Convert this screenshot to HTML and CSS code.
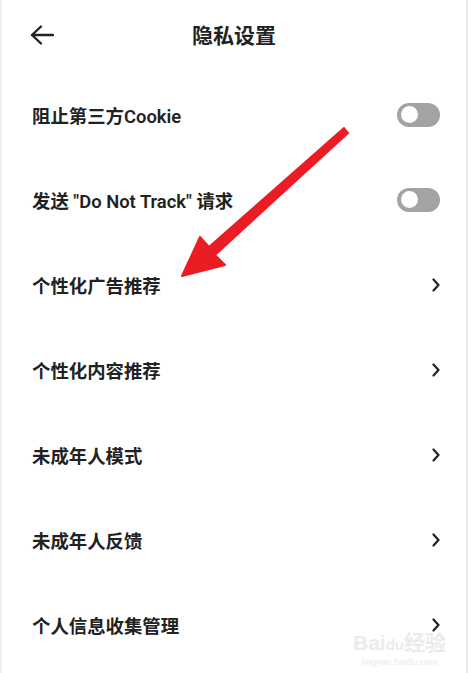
FILE: index.html
```
<!DOCTYPE html>
<html lang="zh-CN">
<head>
    <meta charset="UTF-8">
    <meta name="viewport" content="width=device-width, initial-scale=1.0">
    <title>隐私设置</title>
    <link rel="stylesheet" href="styles.css">
</head>
<body>
    <div class="screen">
        <div class="header">
            <svg class="back" width="24" height="20" viewBox="0 0 24 20">
                <path d="M23 10H2M11 1.5L2 10l9 8.5" fill="none" stroke="#222" stroke-width="2.4" stroke-linecap="round" stroke-linejoin="round"/>
            </svg>
            <h1>隐私设置</h1>
        </div>

        <ul class="list">
            <li class="row">
                <span>阻止第三方Cookie</span>
                <span class="switch"><span class="knob"></span></span>
            </li>
            <li class="row">
                <span>发送 "Do Not Track" 请求</span>
                <span class="switch"><span class="knob"></span></span>
            </li>
            <li class="row">
                <span>个性化广告推荐</span>
                <svg class="chev" width="8" height="14" viewBox="0 0 8 14"><path d="M1.5 1.5L6.5 7l-5 5.5" fill="none" stroke="#222" stroke-width="2.2" stroke-linecap="round" stroke-linejoin="round"/></svg>
            </li>
            <li class="row">
                <span>个性化内容推荐</span>
                <svg class="chev" width="8" height="14" viewBox="0 0 8 14"><path d="M1.5 1.5L6.5 7l-5 5.5" fill="none" stroke="#222" stroke-width="2.2" stroke-linecap="round" stroke-linejoin="round"/></svg>
            </li>
            <li class="row">
                <span>未成年人模式</span>
                <svg class="chev" width="8" height="14" viewBox="0 0 8 14"><path d="M1.5 1.5L6.5 7l-5 5.5" fill="none" stroke="#222" stroke-width="2.2" stroke-linecap="round" stroke-linejoin="round"/></svg>
            </li>
            <li class="row">
                <span>未成年人反馈</span>
                <svg class="chev" width="8" height="14" viewBox="0 0 8 14"><path d="M1.5 1.5L6.5 7l-5 5.5" fill="none" stroke="#222" stroke-width="2.2" stroke-linecap="round" stroke-linejoin="round"/></svg>
            </li>
            <li class="row">
                <span>个人信息收集管理</span>
                <svg class="chev" width="8" height="14" viewBox="0 0 8 14"><path d="M1.5 1.5L6.5 7l-5 5.5" fill="none" stroke="#222" stroke-width="2.2" stroke-linecap="round" stroke-linejoin="round"/></svg>
            </li>
        </ul>

        <!-- red annotation arrow drawn over the list -->
        <svg class="arrow" width="471" height="673" viewBox="0 0 471 673">
            <polygon points="182,276 200,237 209,247 344,128 348,133 215,255 225,265" fill="#ec1c24" stroke="#ec1c24" stroke-width="2" stroke-linejoin="round"/>
        </svg>

        <div class="watermark">
            <div class="wm-brand">Bai<span class="wm-du">du</span>经验</div>
            <div class="wm-url">jingyan.baidu.com</div>
        </div>
    </div>
</body>
</html>
```

FILE: styles.css
```
body {
    margin: 0;
    background: #fff;
    font-family: Roboto, "Noto Sans CJK SC", sans-serif;
    color: #222;
}
.screen {
    position: relative;
    width: 468px;
    height: 673px;
    box-sizing: border-box;
    border-left: 2px solid #efefef;
    border-right: 2px solid #ececec;
    overflow: hidden;
}
.header {
    position: relative;
    height: 72px;
    display: flex;
    align-items: center;
    justify-content: center;
    padding-bottom: 4px;
    box-sizing: border-box;
}
.back {
    position: absolute;
    left: 28px;
    top: 25px;
}
.header h1 {
    margin: 0;
    font-size: 21px;
    font-weight: 600;
    color: #222;
}
.list {
    list-style: none;
    margin: 0;
    padding: 0;
}
.row {
    height: 85px;
    display: flex;
    align-items: center;
    justify-content: space-between;
    padding: 0 26px 0 30px;
    font-size: 18.4px;
    font-weight: 600;
}
.switch {
    width: 43px;
    height: 24px;
    border-radius: 12px;
    background: #a3a3a3;
    display: flex;
    align-items: center;
    padding-left: 4px;
    box-sizing: border-box;
}
.knob {
    width: 17px;
    height: 17px;
    border-radius: 50%;
    background: #fff;
}
.chev {
    margin-right: 0;
}
.arrow {
    position: absolute;
    left: -2px;
    top: 0;
    pointer-events: none;
}
.watermark {
    position: absolute;
    left: 351px;
    top: 631px;
    color: #ebebeb;
    text-align: center;
    font-family: "Liberation Sans", "Noto Sans CJK SC", sans-serif;
}
.wm-brand {
    font-size: 21px;
    font-weight: bold;
    line-height: 23px;
}
.wm-du {
    font-size: 15px;
}
.wm-url {
    font-size: 9.5px;
    line-height: 12px;
}
```
